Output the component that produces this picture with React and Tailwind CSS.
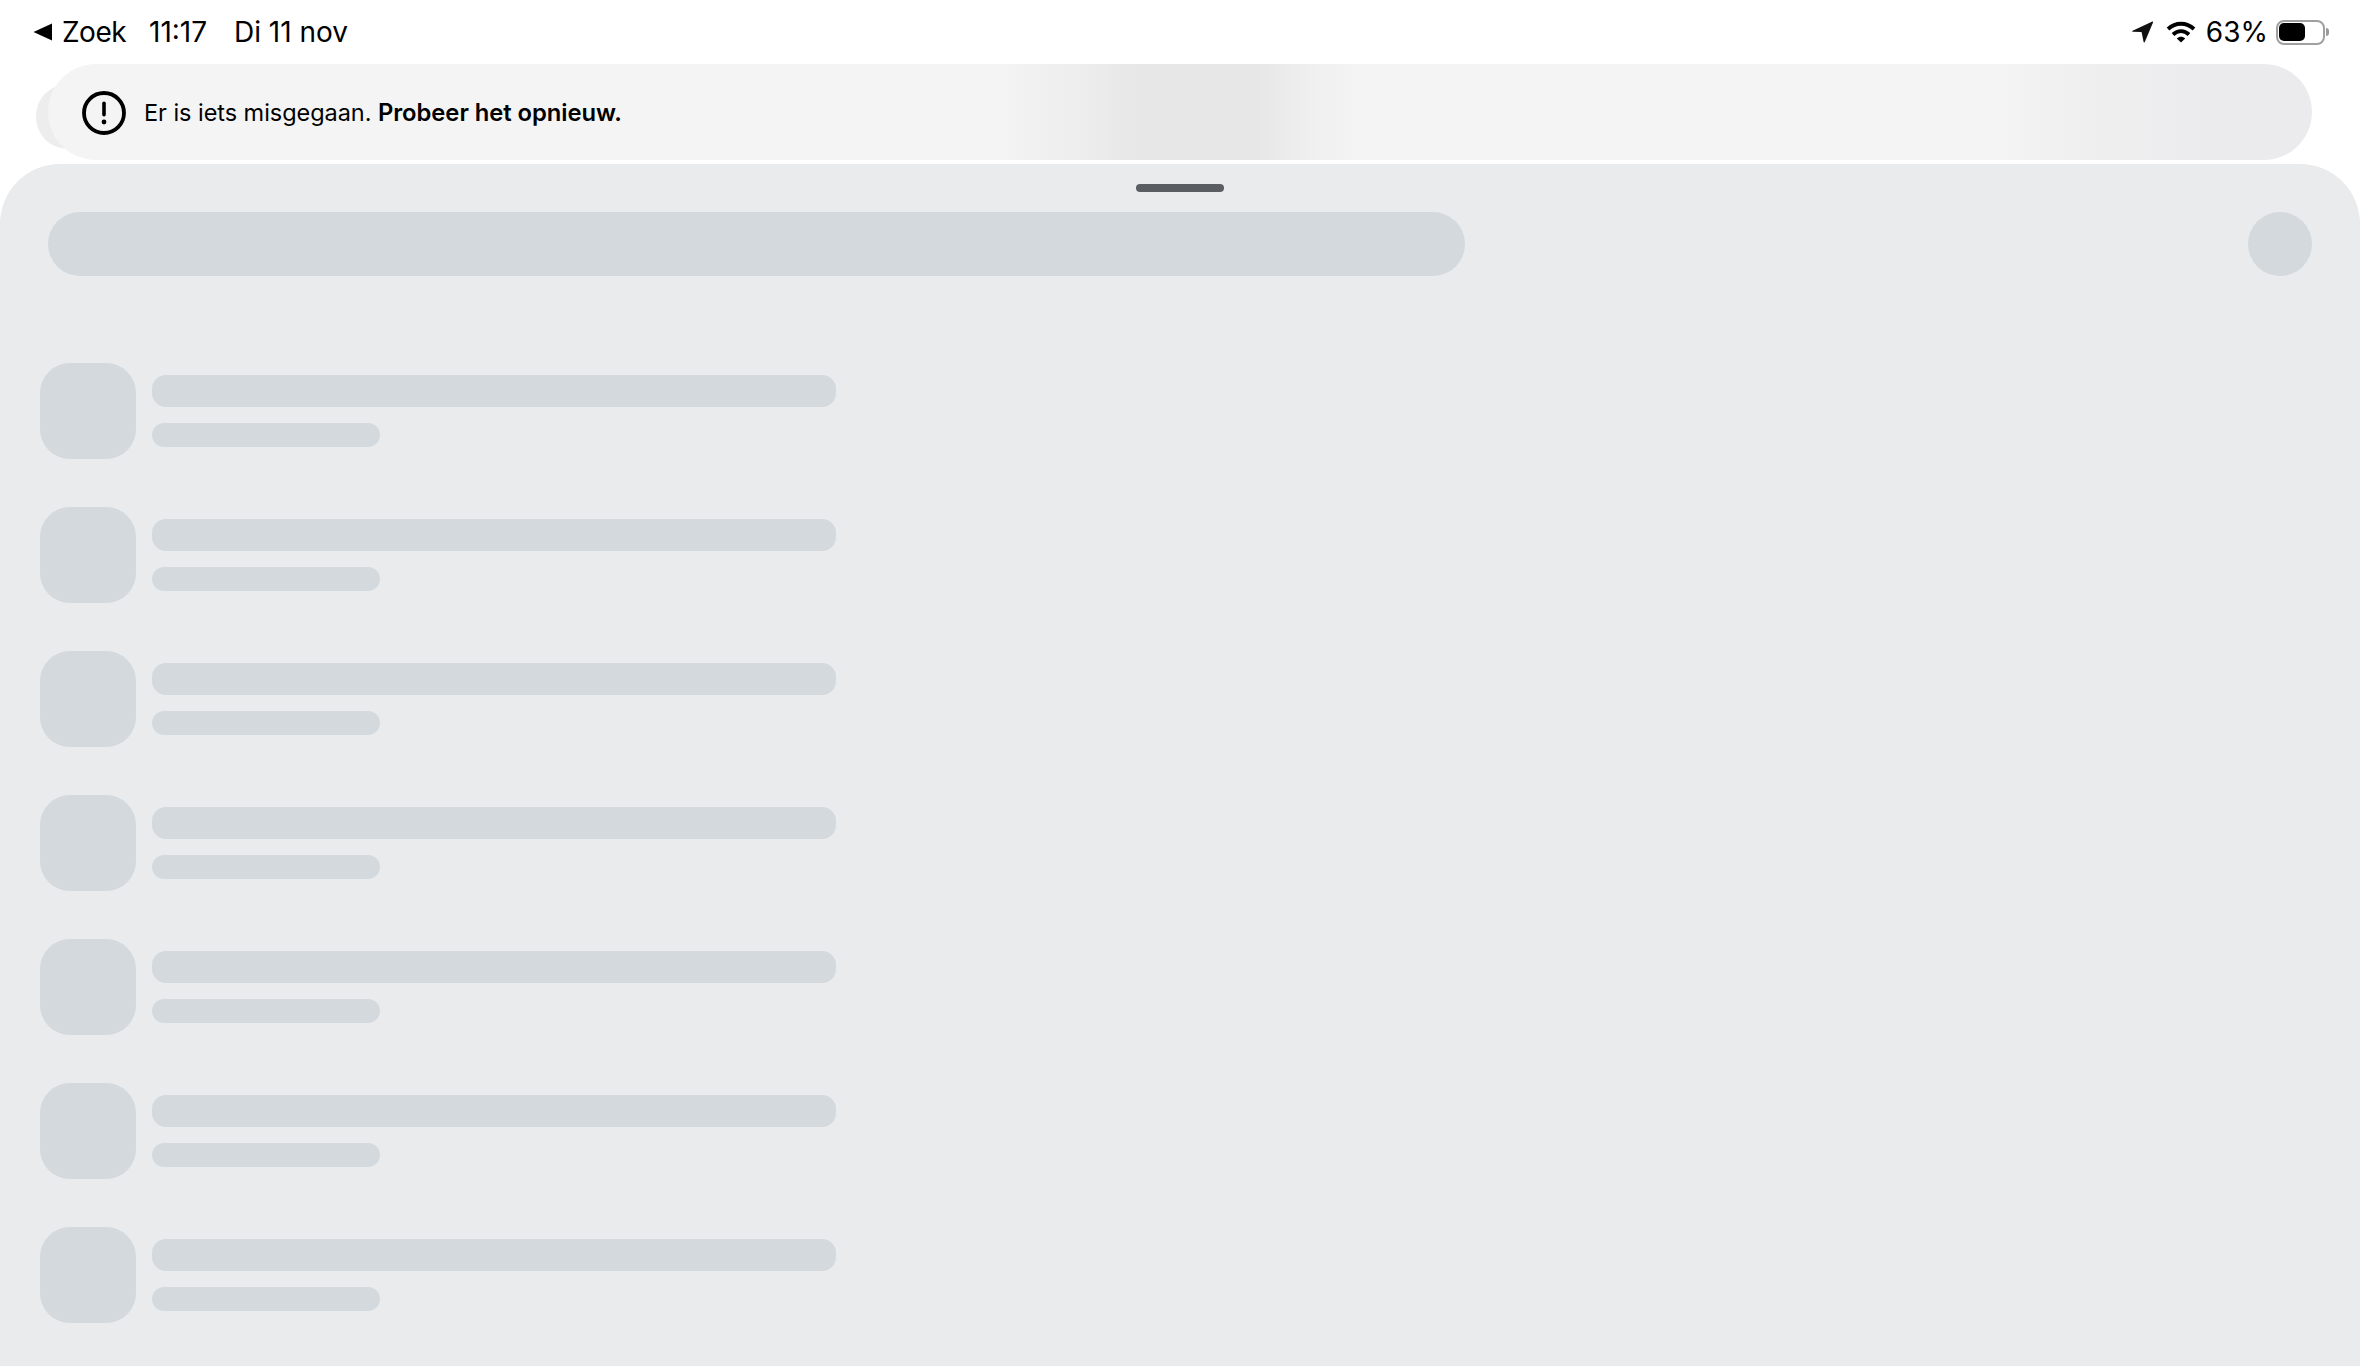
const rows = [0, 1, 2, 3, 4, 5, 6]

function StatusBar() {
  return (
    <div className="flex h-16 items-center justify-between pl-[33px] pr-[31px] text-[28px] leading-none text-black">
      <div className="flex items-center">
        <svg width="19" height="18" viewBox="0 0 19 18" className="mr-[10px]">
          <path d="M19 0.5V17.5L0.5 9Z" fill="#000" />
        </svg>
        <span className="w-[87px] tracking-[-0.5px]">Zoek</span>
        <span className="w-[85px]">11:17</span>
        <span>Di 11 nov</span>
      </div>
      <div className="flex items-center">
        <svg width="21" height="22" viewBox="0 0 21 22" className="mr-[13px]">
          <path d="M20.4 0.6 0.6 9.7c-.6.3-.4 1.1.2 1.1l8.4.3c.3 0 .5.2.5.5l1.9 9.3c.1.6 1 .7 1.2.1L21 1.4c.2-.6-.1-.9-.6-.8Z" fill="#111" />
        </svg>
        <svg width="30" height="22" viewBox="0 0 30 22" fill="none" stroke="#000" strokeWidth="3.8" className="mr-[10px]">
          <path d="M2 8C9.5 1 20.5 1 28 8" />
          <path d="M7 13.5C11.8 9 18.2 9 23 13.5" />
          <path d="M15 21.5 10.8 17.4C13.2 15.2 16.8 15.2 19.2 17.4Z" fill="#000" stroke="none" />
        </svg>
        <span className="mr-[8px]">63%</span>
        <div className="flex items-center">
          <div className="flex h-[25px] w-[49px] items-center rounded-[8px] border-2 border-[#a0a0a0] pl-[1px]">
            <div className="h-[18px] w-[26px] rounded-[5px] bg-black" />
          </div>
          <div className="ml-[1px] h-[8px] w-[3px] rounded-r-full bg-[#9a9a9a]" />
        </div>
      </div>
    </div>
  )
}

function ErrorBanner() {
  return (
    <div className="relative mx-12 h-24">
      <div className="absolute -left-3 top-[20px] h-[65px] w-[80px] rounded-l-[32px] bg-[#ededee]" />
      <div className="relative flex h-24 items-center rounded-[48px] bg-[linear-gradient(90deg,#f4f4f5_0%,#f4f4f5_41.8%,#f0f0f1_44%,#ebebeb_46.5%,#e7e7e7_48%,#e7e7e7_53.5%,#ebebeb_54.5%,#f0f0f1_56%,#f4f4f5_58.2%,#f4f4f5_86%,#efeff0_90%,#ebebed_96%,#ebebed_100%)] pl-[34px] pt-[1px] text-[23.5px] text-black">
        <svg width="44" height="44" viewBox="0 0 44 44" className="mr-[18px]">
          <circle cx="22" cy="22" r="20" fill="none" stroke="#000" strokeWidth="3.8" />
          <rect x="20.2" y="10.5" width="3.6" height="15" rx="1.8" fill="#000" />
          <circle cx="22" cy="31" r="2.4" fill="#000" />
        </svg>
        <span className="tracking-[-0.05px]">
          Er is iets misgegaan. <span className="text-[23.8px] font-semibold">Probeer het opnieuw.</span>
        </span>
      </div>
    </div>
  )
}

function SkeletonRow() {
  return (
    <div className="flex items-center gap-4">
      <div className="h-24 w-24 rounded-[30px] bg-[#d4d9dd]" />
      <div className="flex flex-col gap-4">
        <div className="h-8 w-[684px] rounded-[14px] bg-[#d4d9dd]" />
        <div className="h-6 w-[228px] rounded-[12px] bg-[#d4d9dd]" />
      </div>
    </div>
  )
}

export default function App() {
  return (
    <div className="flex h-[1366px] w-full flex-col overflow-hidden bg-white font-['Inter',sans-serif]">
      <StatusBar />
      <ErrorBanner />
      <div className="mt-1 flex-1 rounded-t-[60px] bg-[#eaebed] pt-5">
        <div className="mx-auto h-2 w-[88px] rounded-full bg-[#5a5d61]" />
        <div className="mt-5 flex items-center justify-between px-12">
          <div className="h-16 w-[1417px] rounded-[32px] bg-[#d4d9dd]" />
          <div className="h-16 w-16 rounded-full bg-[#d4d9dd]" />
        </div>
        <div className="mt-[87px] flex flex-col gap-12 pl-10">
          {rows.map(r => <SkeletonRow key={r} />)}
        </div>
      </div>
    </div>
  )
}
